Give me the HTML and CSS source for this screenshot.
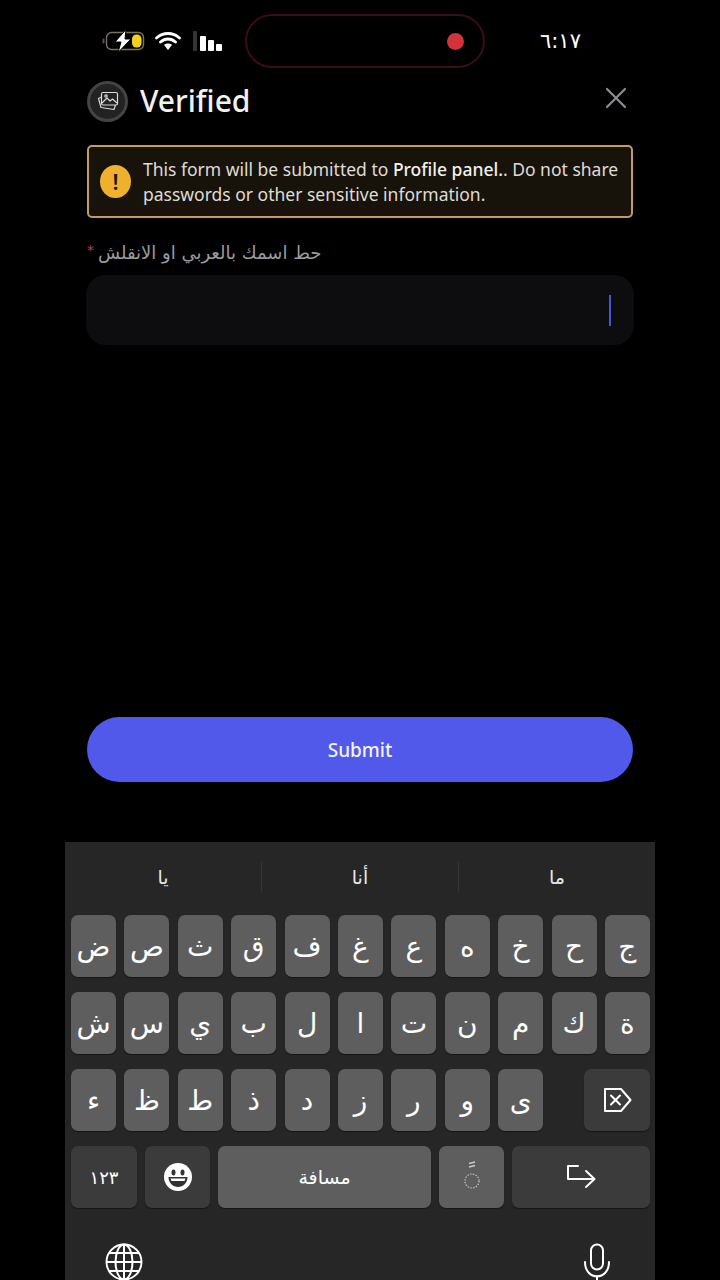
FILE: index.html
```html
<!DOCTYPE html>
<html lang="ar">
  <head>
    <meta charset="UTF-8" />
    <meta name="viewport" content="width=device-width, initial-scale=1.0" />
    <title>Verified</title>
    <link rel="stylesheet" href="styles.css">
  </head>
  <body>
    <div class="status-bar">
      <div class="status-icons">
        <svg class="battery" width="44" height="24" viewBox="0 0 44 24">
          <path d="M1.5 10.5v3" stroke="#55534c" stroke-width="2" stroke-linecap="round" fill="none"/>
          <rect x="4.5" y="3.5" width="37" height="17" rx="5" fill="none" stroke="#77725f" stroke-width="1.4"/>
          <rect x="30" y="5.5" width="9.5" height="13" rx="4.5" fill="#f2d21e"/>
          <path d="M24 0.5 L13 13 h6 L16 23.5 L29 10 h-6 z" fill="#fff" stroke="#000" stroke-width="1"/>
        </svg>
        <svg class="wifi" width="26" height="20" viewBox="0 0 26 20">
          <path d="M1.5 7 C8 1 18 1 24.5 7 M5.5 11 C10 7 16 7 20.5 11" fill="none" stroke="#fff" stroke-width="2.8" stroke-linecap="round"/>
          <path d="M9 14 C11 12 15 12 17 14 L13 19 z" fill="#fff"/>
        </svg>
        <div class="signal">
          <span class="bar bar-off"></span>
          <span class="bar bar-tall"></span>
          <span class="bar bar-mid"></span>
          <span class="bar bar-low"></span>
        </div>
      </div>
      <div class="pill"><span class="rec-dot"></span></div>
      <div class="clock">٦:١٧</div>
    </div>

    <main class="form-panel">
      <header class="form-header">
        <div class="server-icon">
          <svg width="24" height="24" viewBox="0 0 24 24" fill="none" stroke="#d8d8d8" stroke-width="1.2" stroke-linejoin="round">
            <rect x="5.5" y="3.5" width="16" height="12.5" rx="1.5"/>
            <path d="M6 14 L11 9 L14 12 L16.5 10 L21 14"/>
            <circle cx="10" cy="7" r="1.2"/>
            <path d="M5.5 8 L2.5 9.5 L5 18.5 L18 20.5 L19.5 16"/>
          </svg>
        </div>
        <h1 class="form-title">Verified</h1>
        <svg class="close-icon" width="24" height="24" viewBox="0 0 24 24">
          <path d="M3 3 L21 21 M21 3 L3 21" stroke="#8b8d92" stroke-width="2.2" stroke-linecap="round"/>
        </svg>
      </header>

      <div class="notice">
        <div class="notice-icon">!</div>
        <p class="notice-text">This form will be submitted to <strong>Profile panel.</strong>. Do not share<br>passwords or other sensitive information.</p>
      </div>

      <div class="field-label"><span class="required">*</span><span dir="rtl">حط اسمك بالعربي او الانقلش</span></div>
      <div class="field-input"><span class="caret"></span></div>

      <button class="submit-btn">Submit</button>
    </main>

    <section class="keyboard">
      <div class="suggestions">
        <div class="suggestion">يا</div>
        <div class="suggestion">أنا</div>
        <div class="suggestion">ما</div>
      </div>
      <div class="key-row">
        <div class="key">ض</div><div class="key">ص</div><div class="key">ث</div><div class="key">ق</div><div class="key">ف</div><div class="key">غ</div><div class="key">ع</div><div class="key">ه</div><div class="key">خ</div><div class="key">ح</div><div class="key">ج</div>
      </div>
      <div class="key-row">
        <div class="key">ش</div><div class="key">س</div><div class="key">ي</div><div class="key">ب</div><div class="key">ل</div><div class="key">ا</div><div class="key">ت</div><div class="key">ن</div><div class="key">م</div><div class="key">ك</div><div class="key">ة</div>
      </div>
      <div class="key-row">
        <div class="key">ء</div><div class="key">ظ</div><div class="key">ط</div><div class="key">ذ</div><div class="key">د</div><div class="key">ز</div><div class="key">ر</div><div class="key">و</div><div class="key">ى</div>
        <div class="key key-dark key-back">
          <svg width="30" height="26" viewBox="0 0 30 26" fill="none" stroke="#fff" stroke-width="2" stroke-linejoin="round" stroke-linecap="round">
            <path d="M3 2 H19 L28.5 13 L19 24 H3 Z"/>
            <path d="M9 8.5 L18 17.5 M18 8.5 L9 17.5"/>
          </svg>
        </div>
      </div>
      <div class="bottom-row">
        <div class="key key-dark key-num">١٢٣</div>
        <div class="key key-dark key-emoji">
          <svg width="28" height="28" viewBox="0 0 28 28">
            <circle cx="14" cy="14" r="14" fill="#fff"/>
            <ellipse cx="9.5" cy="9.5" rx="2" ry="3" fill="#333"/>
            <ellipse cx="18.5" cy="9.5" rx="2" ry="3" fill="#333"/>
            <path d="M4.5 14 H23.5 C23.5 20 19 24 14 24 C9 24 4.5 20 4.5 14 Z" fill="#333"/>
            <path d="M6.5 15.5 H21.5 L20.5 18 H7.5 Z" fill="#fff"/>
          </svg>
        </div>
        <div class="key key-space">مسافة</div>
        <div class="key key-mark">
          <svg width="18" height="32" viewBox="0 0 18 32" fill="none" stroke="#c9c9c9">
            <path d="M6 2.5 L12 1 M6 6 L12 4.5" stroke-width="1.5"/>
            <circle cx="9" cy="20" r="7" stroke-width="1.2" stroke-dasharray="1.4 1.4"/>
          </svg>
        </div>
        <div class="key key-dark key-enter">
          <svg width="30" height="26" viewBox="0 0 30 26" fill="none" stroke="#fff" stroke-width="2" stroke-linecap="round" stroke-linejoin="round">
            <path d="M12 2 H2 V15 H28"/>
            <path d="M20 7 L28.5 15 L20 23"/>
          </svg>
        </div>
      </div>
      <div class="system-row">
        <svg width="38" height="38" viewBox="0 0 38 38" fill="none" stroke="#fff" stroke-width="2">
          <circle cx="19" cy="19" r="17.5"/>
          <ellipse cx="19" cy="19" rx="8.5" ry="17.5"/>
          <path d="M19 1.5 V36.5 M1.5 19 H36.5 M4 10 H34 M4 28 H34"/>
        </svg>
        <svg width="28" height="44" viewBox="0 0 28 44" fill="none" stroke="#fff" stroke-width="2" stroke-linecap="round">
          <rect x="8" y="1.5" width="12" height="25" rx="6"/>
          <path d="M2 19 C2 38 26 38 26 19 M14 33 V41 M6 41.5 H22"/>
        </svg>
      </div>
    </section>
  </body>
</html>
```

FILE: styles.css
```css
* {
  box-sizing: border-box;
}
html, body {
  margin: 0;
  padding: 0;
}
body {
  width: 720px;
  height: 1280px;
  overflow: hidden;
  background-color: #000;
  color: #fff;
  font-family: "Noto Sans", "DejaVu Sans", sans-serif;
}

/* status bar */
.status-bar {
  display: flex;
  align-items: center;
  height: 54px;
  margin-top: 14px;
  padding-left: 102px;
}
.status-icons {
  display: flex;
  align-items: center;
  width: 143px;
}
.wifi {
  margin-left: 9px;
}
.signal {
  display: flex;
  align-items: flex-end;
  gap: 2px;
  height: 20px;
  margin-left: 12px;
}
.bar {
  width: 6px;
  border-radius: 1px;
  background-color: #fff;
}
.bar-off {
  width: 4px;
  height: 20px;
  margin-right: 1px;
  background-color: #333;
}
.bar-tall {
  height: 15px;
}
.bar-mid {
  height: 11px;
}
.bar-low {
  height: 7px;
}
.pill {
  display: flex;
  align-items: center;
  justify-content: flex-end;
  width: 240px;
  height: 54px;
  padding-right: 19px;
  border: 2px solid #3a0d18;
  border-radius: 27px;
}
.rec-dot {
  width: 17px;
  height: 17px;
  border-radius: 50%;
  background-color: #d23338;
}
.clock {
  margin-left: 55px;
  font-family: "DejaVu Sans", sans-serif;
  font-size: 21px;
}

/* form */
.form-panel {
  height: 774px;
  padding: 12px 87px 0;
}
.form-header {
  display: flex;
  align-items: center;
  height: 42px;
}
.server-icon {
  display: flex;
  align-items: center;
  justify-content: center;
  width: 41px;
  height: 41px;
  border: 3px solid #444;
  border-radius: 50%;
  background-color: #222;
}
.form-title {
  flex: 1;
  margin: -2px 0 0 12px;
  font-size: 30px;
  font-weight: 500;
  color: #f2f2f2;
}
.close-icon {
  margin: -6px 5px 0 0;
}
.notice {
  display: flex;
  align-items: center;
  gap: 12px;
  height: 73px;
  margin-top: 23px;
  padding: 0 8px 0 11px;
  border: 2px solid #c39d5c;
  border-radius: 5px;
  background-color: #18130a;
}
.notice-icon {
  flex: none;
  width: 31px;
  height: 33px;
  border-radius: 50%;
  background-color: #efb02e;
  color: #1a150b;
  font-size: 22px;
  font-weight: 600;
  line-height: 33px;
  text-align: center;
}
.notice-text {
  margin: 0;
  font-size: 17.5px;
  line-height: 25px;
  color: #dfdcd6;
}
.notice-text strong {
  font-weight: 500;
  color: #f2f0ec;
}
.field-label {
  display: flex;
  align-items: flex-start;
  height: 24px;
  margin-top: 23px;
  font-family: "DejaVu Sans", sans-serif;
  font-size: 18px;
  line-height: 24px;
  color: #9b9ba0;
}
.required {
  margin-right: 4px;
  color: #b8405a;
  font-size: 14px;
  line-height: 18px;
}
.field-input {
  display: flex;
  align-items: center;
  justify-content: flex-end;
  width: 548px;
  height: 70px;
  margin: 10px -1px 0;
  padding-right: 23px;
  border-radius: 20px;
  background-color: #0d0d10;
}
.caret {
  width: 2px;
  height: 31px;
  background-color: #4a55d8;
}
.submit-btn {
  display: block;
  width: 546px;
  height: 65px;
  margin-top: 372px;
  border: none;
  border-radius: 33px;
  background-color: #5059ea;
  color: #f4f4ff;
  font-family: "Noto Sans", sans-serif;
  font-size: 19px;
  font-weight: 500;
}

/* keyboard */
.keyboard {
  width: 590px;
  height: 438px;
  margin: 0 0 0 65px;
  padding: 0 5px 0 6px;
  overflow: hidden;
  background-color: #262626;
  font-family: "DejaVu Sans", sans-serif;
}
.suggestions {
  display: flex;
  align-items: center;
  height: 73px;
  margin: 0 -5px 0 -6px;
  padding-bottom: 3px;
}
.suggestion {
  flex: 1;
  height: 30px;
  font-size: 19px;
  line-height: 30px;
  text-align: center;
  color: #e6e6e6;
  border-right: 1px solid #363636;
}
.suggestion:last-child {
  border-right: none;
}
.key-row {
  display: grid;
  grid-template-columns: repeat(11, 45px);
  justify-content: space-between;
  margin-bottom: 15px;
}
.key {
  display: flex;
  align-items: center;
  justify-content: center;
  height: 62px;
  border-radius: 7px;
  background-color: #5e5e5e;
  font-size: 28px;
  color: #fff;
  box-shadow: 0 1px 1px #161616;
}
.key-dark {
  background-color: #3b3b3b;
}
.key-back {
  grid-column: 10 / span 2;
  justify-self: end;
  width: 66px;
}
.bottom-row {
  display: flex;
  gap: 8px;
}
.key-num {
  width: 66px;
  font-size: 18px;
}
.key-emoji {
  width: 65px;
}
.key-space {
  width: 213px;
  font-size: 19px;
}
.key-mark {
  width: 65px;
}
.key-enter {
  width: 138px;
}
.system-row {
  display: flex;
  justify-content: space-between;
  align-items: flex-start;
  margin-top: 35px;
  padding: 0 39px 0 34px;
}
```
